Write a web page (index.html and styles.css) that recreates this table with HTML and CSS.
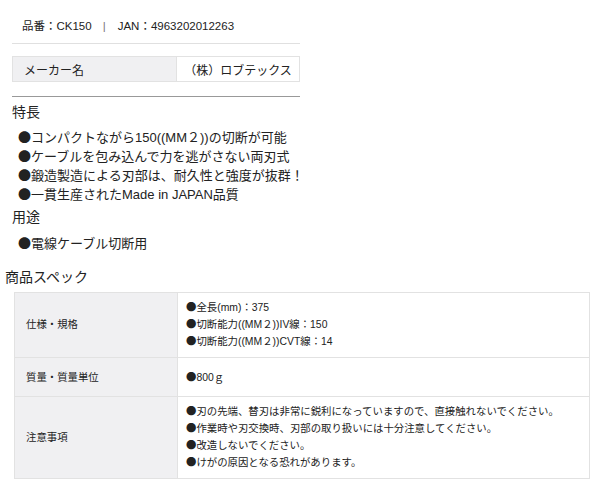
FILE: index.html
```html
<!DOCTYPE html>
<html lang="ja">
<head>
<meta charset="utf-8">
<link rel="stylesheet" href="styles.css">
</head>
<body>
<div class="page">
  <div class="codes">品番：CK150<span class="sep">|</span>JAN：4963202012263</div>
  <table class="maker">
    <tr><th>メーカー名</th><td>（株）ロブテックス</td></tr>
  </table>
  <div class="rule"></div>
  <h3 class="sec">特長</h3>
  <ul class="feat">
    <li><span class="b">●</span>コンパクトながら150((MM２))の切断が可能</li>
    <li><span class="b">●</span>ケーブルを包み込んで力を逃がさない両刃式</li>
    <li><span class="b">●</span>鍛造製造による刃部は、耐久性と強度が抜群！</li>
    <li><span class="b">●</span>一貫生産されたMade in JAPAN品質</li>
  </ul>
  <h3 class="sec sec-use">用途</h3>
  <ul class="feat use">
    <li><span class="b">●</span>電線ケーブル切断用</li>
  </ul>
  <h3 class="spec-title">商品スペック</h3>
  <table class="spec">
    <tr><th>仕様・規格</th><td><span class="b">●</span>全長(mm)：375<br><span class="b">●</span>切断能力((MM２))IV線：150<br><span class="b">●</span>切断能力((MM２))CVT線：14</td></tr>
    <tr class="single"><th>質量・質量単位</th><td><span class="b">●</span>800ｇ</td></tr>
    <tr><th>注意事項</th><td><span class="b">●</span>刃の先端、替刃は非常に鋭利になっていますので、直接触れないでください。<br><span class="b">●</span>作業時や刃交換時、刃部の取り扱いには十分注意してください。<br><span class="b">●</span>改造しないでください。<br><span class="b">●</span>けがの原因となる恐れがあります。</td></tr>
  </table>
</div>
</body>
</html>
```

FILE: styles.css
```css
* { box-sizing: border-box; }
body {
  margin: 0;
  background: #fff;
  color: #222;
  font-family: "Liberation Sans", "Noto Sans CJK JP", sans-serif;
}
.b {
  font-family: "Noto Sans CJK JP", sans-serif;
  line-height: 0;
}
.page { padding: 18px 0 0 0; }
.codes {
  margin-left: 12px;
  width: 288px;
  padding: 0 0 9px 10px;
  font-size: 11.5px;
  line-height: 16px;
  border-bottom: 1px solid #e0e0e0;
}
.sep {
  color: #777;
  margin: 0 12px 0 11px;
}
.maker {
  margin: 12px 0 0 12px;
  width: 288px;
  border-collapse: collapse;
  font-size: 12px;
}
.maker th, .maker td {
  border: 1px solid #e2e2e2;
  height: 25px;
  padding: 0;
  font-weight: normal;
  white-space: nowrap;
}
.maker th {
  width: 164px;
  padding-left: 11px;
  background: #f0f0f2;
  text-align: left;
}
.maker td { text-align: center; }
.rule {
  margin: 14px 0 0 12px;
  width: 288px;
  border-top: 1px solid #999;
}
.sec {
  margin: 5px 0 0 12px;
  font-size: 14px;
  font-weight: normal;
  line-height: 20px;
}
.sec-use { margin-top: 3px; }
.feat {
  list-style: none;
  margin: 6px 0 0 0;
  padding: 0 0 0 18px;
  font-size: 13px;
  line-height: 19px;
}
.feat.use { margin-top: 7px; }
.spec-title {
  margin: 14px 0 0 5px;
  font-size: 14px;
  font-weight: normal;
  line-height: 20px;
}
.spec {
  margin: 5px 0 0 14px;
  width: 576px;
  border-collapse: collapse;
  font-size: 10.4px;
}
.spec th, .spec td {
  border: 1px solid #e2e2e2;
  line-height: 17px;
  padding: 6px 8px 7px;
  font-weight: normal;
  text-align: left;
  vertical-align: middle;
}
.spec th {
  width: 163px;
  padding-left: 11px;
  background: #f0f0f2;
}
.spec .single th, .spec .single td { padding-top: 11px; padding-bottom: 10px; }
```
